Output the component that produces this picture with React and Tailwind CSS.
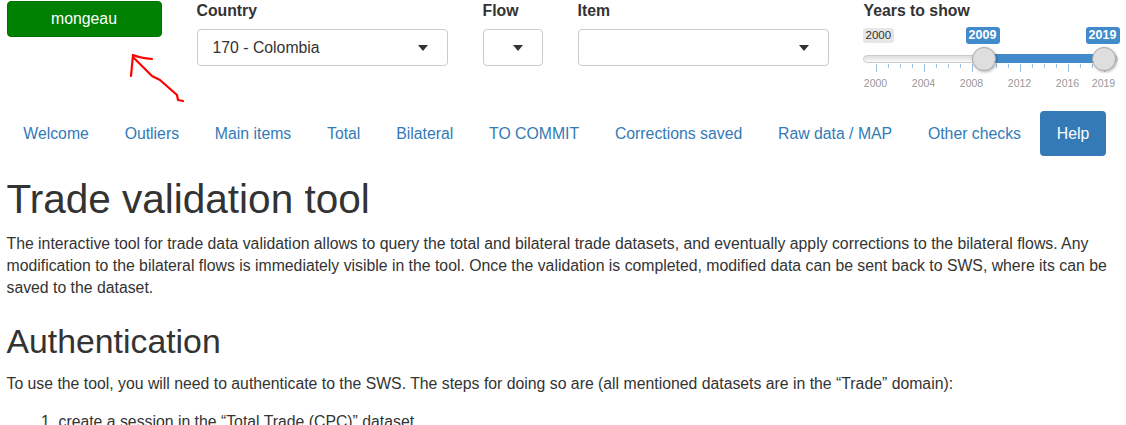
import React from 'react';

const Caret = () => (
  <span className="inline-block w-0 h-0 border-l-[5px] border-r-[5px] border-t-[6px] border-l-transparent border-r-transparent border-t-[#333]" />
);

const SelectBox = ({ value }) => (
  <div className="w-full h-[37px] border border-[#ccc] rounded-[4px] bg-white flex items-center justify-between pl-[15px] pr-[19px] text-[15.8px] text-[#333]">
    <span>{value}</span>
    <Caret />
  </div>
);

const Field = ({ label, children, width }) => (
  <div className={width}>
    <div className="font-bold text-[15.8px] leading-[20px] text-[#333] mb-[8px]">{label}</div>
    {children}
  </div>
);

const years = Array.from({ length: 20 }, (_, i) => 2000 + i);
const tickLabels = [
  { year: 2000, x: 12 },
  { year: 2004, x: 60 },
  { year: 2008, x: 108 },
  { year: 2012, x: 156 },
  { year: 2016, x: 204 },
  { year: 2019, x: 240 },
];

// ion.rangeSlider style widget
const YearSlider = () => (
  <div className="relative w-[256px] h-[70px]">
    <div className="absolute left-[-1px] top-[6px] h-[15px] px-[3px] rounded-[3px] bg-[#e6e6e6] text-[11.5px] leading-[15px] text-[#333]">2000</div>
    <div className="absolute left-[102px] top-[5px] h-[17px] w-[34px] rounded-[3px] bg-[#428bca] text-white text-[12.5px] font-bold leading-[17px] text-center">2009</div>
    <div className="absolute left-[222px] top-[5px] h-[17px] w-[34px] rounded-[3px] bg-[#428bca] text-white text-[12.5px] font-bold leading-[17px] text-center">2019</div>
    <div className="absolute left-[-1px] right-[2px] top-[33px] h-[8px] rounded-full border border-[#ccc] bg-gradient-to-b from-[#ddd] to-[#fafafa]" />
    <div className="absolute left-[120px] w-[120px] top-[32px] h-[9px] bg-[#428bca]" />
    <svg className="absolute left-0 top-[42px]" width="256" height="12">
      {years.map((y, i) => {
        const x = 12 + i * 12 + 0.5;
        const major = (y - 2000) % 4 === 0 || y === 2019;
        return <line key={y} x1={x} x2={x} y1="0" y2={major ? 8 : 4} stroke="#9ec1e1" strokeWidth="1" />;
      })}
    </svg>
    {tickLabels.map((t) => (
      <div
        key={t.year}
        className="absolute top-[55px] w-[40px] -ml-[20px] text-center text-[10.5px] leading-[12px] text-[#999]"
        style={{ left: t.x }}
      >
        {t.year}
      </div>
    ))}
    <div className="absolute left-[108px] top-[25px] w-[24px] h-[24px] rounded-full bg-[#dedede] border border-[#aaa] shadow-[1px_1px_3px_rgba(0,0,0,0.3)]" />
    <div className="absolute left-[228px] top-[25px] w-[24px] h-[24px] rounded-full bg-[#dedede] border border-[#aaa] shadow-[1px_1px_3px_rgba(0,0,0,0.3)]" />
  </div>
);

const tabs = [
  'Welcome',
  'Outliers',
  'Main items',
  'Total',
  'Bilateral',
  'TO COMMIT',
  'Corrections saved',
  'Raw data / MAP',
  'Other checks',
  'Help',
];

export default function App() {
  return (
    <div className="relative bg-white font-['Liberation_Sans',Arial,sans-serif] text-[#333] px-[6.5px] min-h-[425px] overflow-hidden">
      {/* top controls */}
      <div className="flex gap-[35px] pt-[1px] h-[101px]">
        <div className="w-[155px]">
          <button className="w-full h-[36px] rounded-[4px] bg-[#008000] border border-[#007000] text-white text-[15.8px]">
            mongeau
          </button>
        </div>
        <Field label="Country" width="w-[251px]">
          <SelectBox value="170 - Colombia" />
        </Field>
        <Field label="Flow" width="w-[60px]">
          <SelectBox value="" />
        </Field>
        <Field label="Item" width="w-[251px]">
          <SelectBox value="" />
        </Field>
        <Field label="Years to show" width="w-[256px]">
          <div className="-mt-[7px]">
            <YearSlider />
          </div>
        </Field>
      </div>

      {/* hand-drawn annotation arrow */}
      <svg className="absolute left-[120px] top-[48px] pointer-events-none" width="80" height="60">
        <path
          d="M13 7 L11 28 M13 7 Q20 10 32 11 M14 10 L32 28 L40 32 L57 47 L58 52 L63 53"
          stroke="#ff0000"
          strokeWidth="2.2"
          fill="none"
          strokeLinecap="round"
          strokeLinejoin="round"
        />
      </svg>

      {/* nav pills */}
      <ul className="flex gap-[2.2px] mt-[10px] text-[15.8px] leading-[22px]">
        {tabs.map((t) => (
          <li key={t}>
            <a
              className={
                t === 'Help'
                  ? 'block px-[16.8px] py-[11.5px] rounded-[4px] bg-[#337ab7] text-white'
                  : 'block px-[16.8px] py-[11.5px] rounded-[4px] text-[#337ab7]'
              }
            >
              {t}
            </a>
          </li>
        ))}
      </ul>

      {/* content */}
      <h1 className="text-[40.5px] leading-[1.1] font-normal mt-[21px] mb-[11px]">Trade validation tool</h1>
      <p className="text-[15.8px] leading-[22px] mb-[11px]">
        The interactive tool for trade data validation allows to query the total and bilateral trade datasets, and
        eventually apply corrections to the bilateral flows. Any modification to the bilateral flows is immediately
        visible in the tool. Once the validation is completed, modified data can be sent back to SWS, where its can be
        saved to the dataset.
      </p>
      <h2 className="text-[33.8px] leading-[1.1] font-normal mt-[24px] mb-[13px]">Authentication</h2>
      <p className="text-[15.8px] leading-[22px] mb-[16px]">
        To use the tool, you will need to authenticate to the SWS. The steps for doing so are (all mentioned datasets
        are in the “Trade” domain):
      </p>
      <ol className="list-decimal pl-[52px] text-[15.8px] leading-[22px]">
        <li>create a session in the “Total Trade (CPC)” dataset</li>
      </ol>
    </div>
  );
}
